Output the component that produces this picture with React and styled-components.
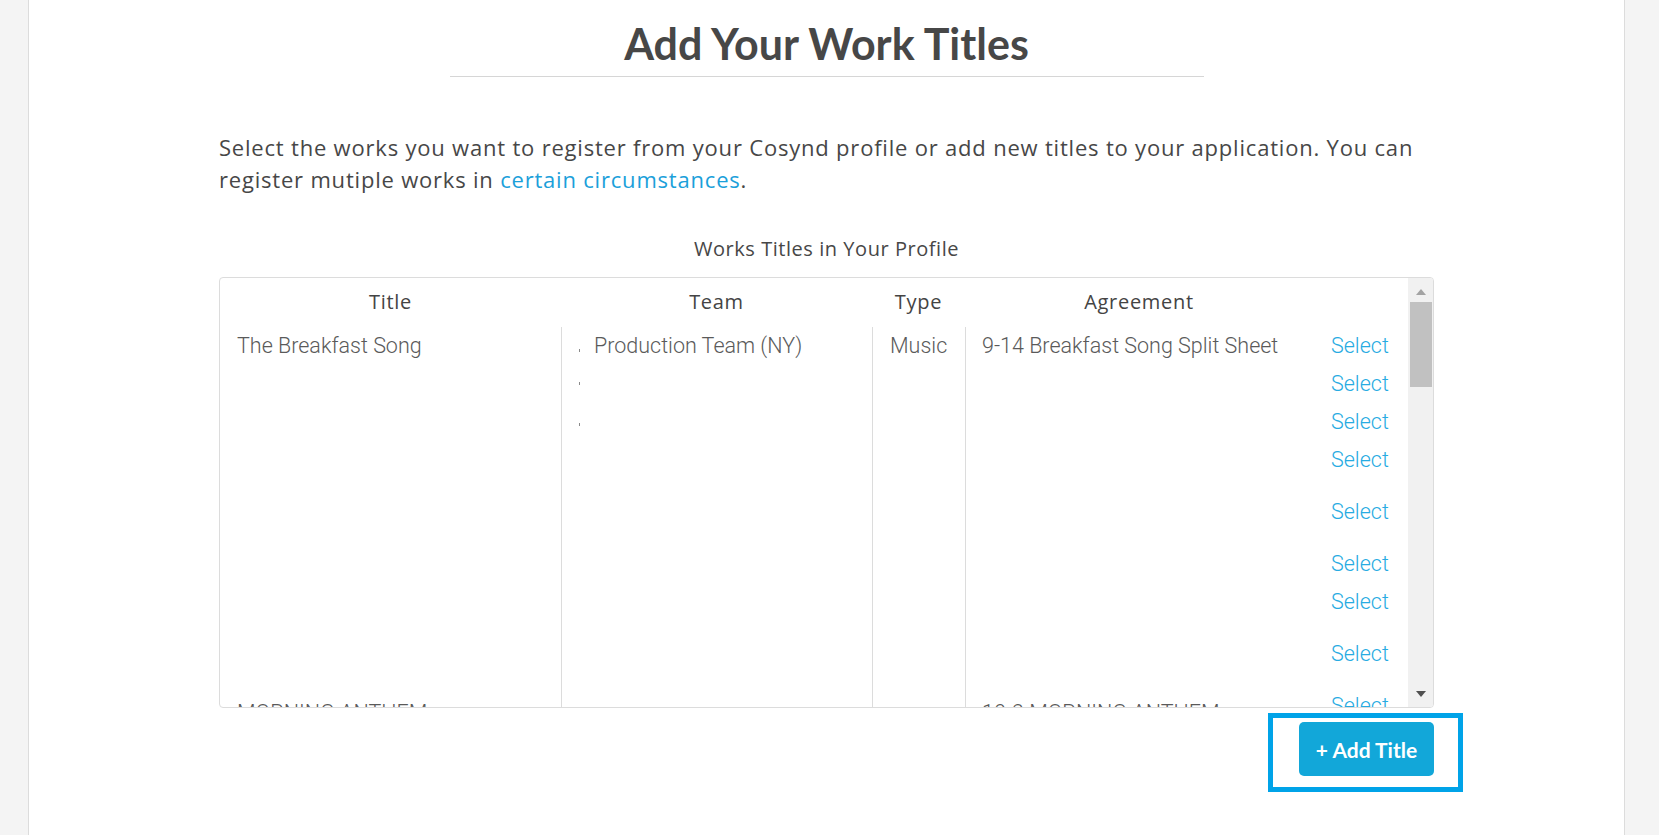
import React from 'react'
import styled, { createGlobalStyle } from 'styled-components'

const GlobalStyle = createGlobalStyle`
  html, body {
    margin: 0;
    padding: 0;
    background: #f4f4f4;
  }
  * {
    box-sizing: border-box;
  }
`;

const Panel = styled.div`
  margin-left: 28px;
  width: 1597px;
  min-height: 835px;
  background: #fff;
  border-left: 1px solid #dcdcdc;
  border-right: 1px solid #dcdcdc;
  font-family: 'Open Sans', 'Noto Sans', sans-serif;
  color: #4a4a4a;
`;

const Content = styled.div`
  width: 1215px;
  margin: 0 auto;
  padding-top: 18px;
`;

const Heading = styled.h1`
  margin: 0;
  text-align: center;
  font-family: Lato, 'Noto Sans', sans-serif;
  font-size: 43px;
  font-weight: 700;
  line-height: 52px;
  color: #474747;
`;

const Rule = styled.div`
  width: 754px;
  height: 1px;
  margin: 6px auto 0;
  background: #d6d6d6;
`;

const Intro = styled.p`
  margin: 54px 0 0;
  font-size: 22px;
  font-weight: 500;
  letter-spacing: 0.8px;
  line-height: 32px;
  color: #474747;
`;

const Link = styled.a`
  color: #1ba0da;
  text-decoration: none;
`;

const Caption = styled.div`
  margin-top: 40px;
  text-align: center;
  font-size: 20px;
  font-weight: 500;
  letter-spacing: 0.55px;
  line-height: 28px;
  color: #474747;
`;

const TableBox = styled.div`
  margin-top: 14px;
  height: 431px;
  border: 1px solid #dcdcdc;
  border-radius: 4px;
  display: flex;
  overflow: hidden;
`;

const TableBody = styled.div`
  flex: 1;
  overflow: hidden;
  font-family: Roboto, 'Liberation Sans', sans-serif;
  font-size: 21.5px;
`;

const Grid = styled.div`
  display: grid;
  grid-template-columns: 341px 311px 93px 348px 95px;
`;

const HeadCell = styled.div`
  height: 49px;
  padding-bottom: 2px;
  display: flex;
  align-items: center;
  justify-content: center;
  font-family: 'Open Sans', 'Noto Sans', sans-serif;
  font-size: 20px;
  font-weight: 500;
  letter-spacing: 0.7px;
  color: #444;
`;

const Cell = styled.div`
  display: flex;
  flex-direction: column;
  padding-left: ${(p) => p.pad || 17}px;
  padding-top: ${(p) => p.lead || 0}px;
  padding-bottom: ${(p) => p.bottom || 0}px;
  border-left: ${(p) => (p.divided ? '1px solid #dcdcdc' : 'none')};
  color: #5a5a5a;
  font-weight: 300;
`;

const Line = styled.div`
  height: ${(p) => p.h || 38}px;
  line-height: 38px;
  white-space: nowrap;
  display: flex;
  align-items: flex-start;
`;

const Tick = styled.span`
  display: inline-block;
  width: 1px;
  height: 3px;
  margin-top: ${(p) => p.top}px;
  margin-right: 14px;
  background: #8a8a8a;
`;

const SelectLink = styled.a`
  color: #27abe2;
  text-decoration: none;
  font-weight: 300;
`;

const Scrollbar = styled.div`
  width: 25px;
  background: #f1f1f1;
  display: flex;
  flex-direction: column;
  align-items: center;
`;

const Arrow = styled.div`
  width: 0;
  height: 0;
  margin: ${(p) => (p.down ? 'auto 0 10px' : '11px 0 0')};
  border-left: 5px solid transparent;
  border-right: 5px solid transparent;
  ${(p) =>
    p.down
      ? 'border-top: 6px solid #505050;'
      : 'border-bottom: 6px solid #a3a3a3;'}
`;

const Thumb = styled.div`
  width: 22px;
  height: 85px;
  margin-top: 7px;
  background: #c1c1c1;
`;

const Actions = styled.div`
  display: flex;
  justify-content: flex-end;
  margin-right: -29px;
  margin-top: 5px;
`;

const FocusFrame = styled.div`
  border: 5px solid #00a3e8;
  padding: 4px 24px 11px 26px;
`;

const AddButton = styled.button`
  width: 135px;
  height: 54px;
  border: none;
  border-radius: 5px;
  background: #12a7d9;
  color: #fff;
  font-family: Lato, 'Noto Sans', sans-serif;
  font-size: 21px;
  font-weight: 700;
  cursor: pointer;
`;

const rows = [
  {
    title: 'The Breakfast Song',
    teams: [
      { name: 'Production Team (NY)', tick: 22 },
      { name: '', tick: 17 },
      { name: '', tick: 20 },
    ],
    type: 'Music',
    agreement: '9-14 Breakfast Song Split Sheet',
    selects: [38, 38, 38, 52, 52, 38, 52, 52],
    bottom: 13,
    lead: 0,
  },
  {
    title: 'MORNING ANTHEM',
    teams: [],
    type: '',
    agreement: '10-2 MORNING ANTHEM',
    selects: [38, 38],
    lead: 7,
  },
]

function App() {
  return (
    <>
      <GlobalStyle />
      <Panel>
        <Content>
          <Heading>Add Your Work Titles</Heading>
          <Rule />
          <Intro>
            Select the works you want to register from your Cosynd profile or
            add new titles to your application. You can register mutiple works
            in <Link href="#">certain circumstances</Link>.
          </Intro>
          <Caption>Works Titles in Your Profile</Caption>
          <TableBox>
            <TableBody>
              <Grid>
                <HeadCell>Title</HeadCell>
                <HeadCell>Team</HeadCell>
                <HeadCell>Type</HeadCell>
                <HeadCell>Agreement</HeadCell>
                <HeadCell />
                {rows.map((row, i) => (
                  <React.Fragment key={`row_${i}`}>
                    <Cell pad={17} lead={row.lead} bottom={row.bottom}>
                      <Line>{row.title}</Line>
                    </Cell>
                    <Cell divided pad={17}>
                      {row.teams.map((t, j) => (
                        <Line key={`team_${j}`}>
                          <Tick top={t.tick} />
                          {t.name}
                        </Line>
                      ))}
                    </Cell>
                    <Cell divided pad={17} lead={row.lead}>
                      <Line>{row.type}</Line>
                    </Cell>
                    <Cell divided pad={16} lead={row.lead}>
                      <Line>{row.agreement}</Line>
                    </Cell>
                    <Cell pad={18}>
                      {row.selects.map((h, j) => (
                        <Line key={`sel_${j}`} h={h}>
                          <SelectLink href="#">Select</SelectLink>
                        </Line>
                      ))}
                    </Cell>
                  </React.Fragment>
                ))}
              </Grid>
            </TableBody>
            <Scrollbar>
              <Arrow />
              <Thumb />
              <Arrow down />
            </Scrollbar>
          </TableBox>
          <Actions>
            <FocusFrame>
              <AddButton>+ Add Title</AddButton>
            </FocusFrame>
          </Actions>
        </Content>
      </Panel>
    </>
  )
}

export default App
